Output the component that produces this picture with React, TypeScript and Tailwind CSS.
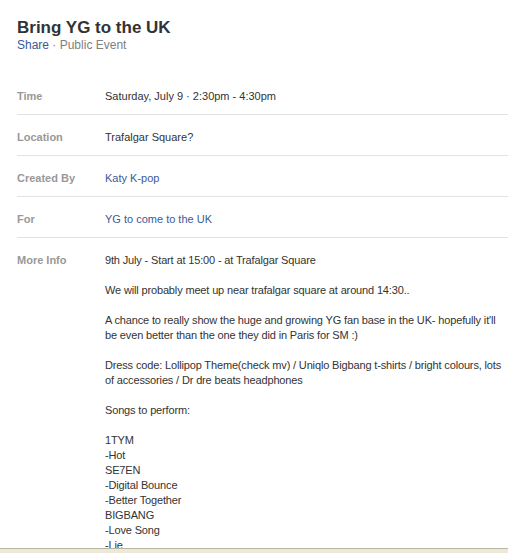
import React from 'react';

const rows = [
  { label: 'Time', value: <span>Saturday, July 9 · 2:30pm - 4:30pm</span> },
  { label: 'Location', value: <span>Trafalgar Square?</span> },
  { label: 'Created By', value: <a className="text-[#3b5998]">Katy K-pop</a> },
  { label: 'For', value: <a className="text-[#3b5998]">YG to come to the UK</a> },
];

const moreInfo = `9th July - Start at 15:00 - at Trafalgar Square

We will probably meet up near trafalgar square at around 14:30..

A chance to really show the huge and growing YG fan base in the UK- hopefully it'll be even better than the one they did in Paris for SM :)

Dress code: Lollipop Theme(check mv) / Uniqlo Bigbang t-shirts / bright colours, lots of accessories / Dr dre beats headphones

Songs to perform:

1TYM
-Hot
SE7EN
-Digital Bounce
-Better Together
BIGBANG
-Love Song
-Lie
-Haru Haru
-Lollipop`;

export default function App() {
  return (
    <div
      className="h-[553px] flex flex-col bg-white text-[11px] text-[#333]"
      style={{ fontFamily: '"Liberation Sans", Arial, sans-serif' }}
    >
      <div className="flex-1 overflow-hidden pl-[17px]">
        <header className="pt-[18px]">
          <h1 className="text-[17px] font-bold leading-[20px] text-[#333]">Bring YG to the UK</h1>
          <p className="text-[12px] leading-[14px] text-[#808080]">
            <a className="text-[#3b5998]">Share</a> · Public Event
          </p>
        </header>

        <div className="mt-[22px]">
          {rows.map((r) => (
            <div key={r.label} className="flex pt-[15px] pb-[11px] border-b border-[#e2e2e2] leading-[14px]">
              <div className="w-[88px] shrink-0 font-bold text-[#999]">{r.label}</div>
              <div className="flex-1">{r.value}</div>
            </div>
          ))}
          <div className="flex pt-[15px] leading-[15px]">
            <div className="w-[88px] shrink-0 font-bold text-[#999]">More Info</div>
            <div className="flex-1 whitespace-pre-line tracking-[-0.15px]">{moreInfo}</div>
          </div>
        </div>
      </div>
      <div className="h-[5px] shrink-0 border-t border-[#b9b6a8] bg-[#ece9d8]" />
    </div>
  );
}
